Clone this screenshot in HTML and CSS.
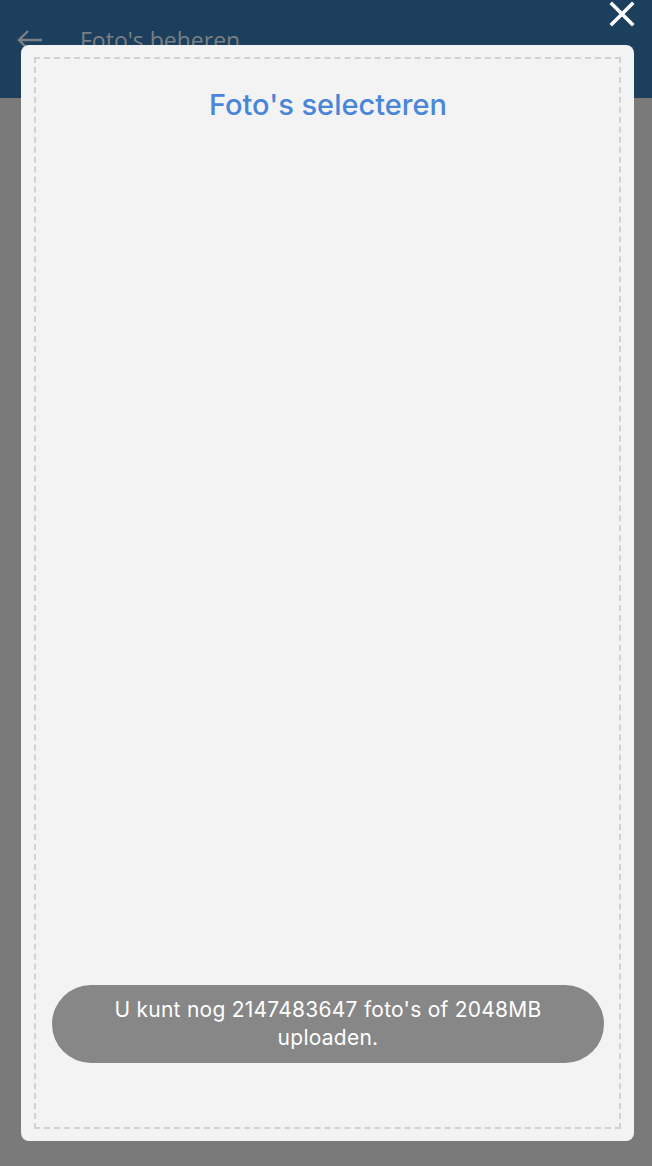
FILE: index.html
```html
<!DOCTYPE html>
<html lang="nl">
<head>
<meta charset="utf-8">
<title>Foto's selecteren</title>
<link rel="stylesheet" href="styles.css">
</head>
<body>
<div class="page">
  <header class="appbar">
    <svg class="back" width="28" height="22" viewBox="0 0 28 22">
      <path d="M26 11H3M12 2L3 11l9 9" fill="none" stroke="#7c7f83" stroke-width="2.4"/>
    </svg>
    <span class="appbar-title">Foto's beheren</span>
  </header>
  <main class="backdrop"></main>
</div>
<button class="close" aria-label="Sluiten">
  <svg width="26" height="26" viewBox="0 0 26 26">
    <path d="M3 3L23 23M23 3L3 23" stroke="#ffffff" stroke-width="3.6" stroke-linecap="square"/>
  </svg>
</button>
<div class="modal">
  <div class="dropzone">
    <h1 class="title">Foto's selecteren</h1>
    <div class="spacer"></div>
    <div class="toast">U kunt nog 2147483647 foto's of 2048MB uploaden.</div>
  </div>
</div>
</body>
</html>
```
FILE: styles.css
```css
html, body {
  margin: 0;
  padding: 0;
  height: 100%;
}
body {
  font-family: Inter, Roboto, "Noto Sans", sans-serif;
  background: #7a7a7a;
  overflow: hidden;
}
.page {
  display: flex;
  flex-direction: column;
  height: 1166px;
}
.appbar {
  height: 98px;
  background: #1b3f5c;
  display: flex;
  align-items: center;
  padding: 0 0 18px 16px;
  box-sizing: border-box;
  gap: 36px;
}
.back {
  display: block;
}
.appbar-title {
  color: #7c7f83;
  font-size: 23px;
  font-family: "Open Sans", Roboto, sans-serif;
}
.backdrop {
  flex: 1;
  background: #7a7a7a;
}
.close {
  position: absolute;
  top: 0;
  left: 605px;
  width: 34px;
  height: 28px;
  border: 0;
  padding: 0;
  background: transparent;
  display: flex;
  align-items: center;
  justify-content: center;
}
.modal {
  position: absolute;
  top: 45px;
  left: 21px;
  width: 613px;
  height: 1096px;
  background: #f3f3f3;
  border-radius: 8px;
  padding: 12px 13px;
  box-sizing: border-box;
}
.dropzone {
  height: 100%;
  border: 2px dashed #d2d2d2;
  box-sizing: border-box;
  display: flex;
  flex-direction: column;
  padding: 0 15px 64px 16px;
}
.title {
  margin: 28px 0 0;
  text-align: center;
  color: #4a86d8;
  font-size: 29px;
  font-weight: 500;
  line-height: 36px;
}
.spacer {
  flex: 1;
}
.toast {
  background: #878787;
  color: #ffffff;
  border-radius: 39px;
  height: 78px;
  box-sizing: border-box;
  padding: 11px 40px;
  text-align: center;
  font-size: 21px;
  letter-spacing: 0.25px;
  line-height: 28px;
  display: flex;
  align-items: center;
  justify-content: center;
}
```
